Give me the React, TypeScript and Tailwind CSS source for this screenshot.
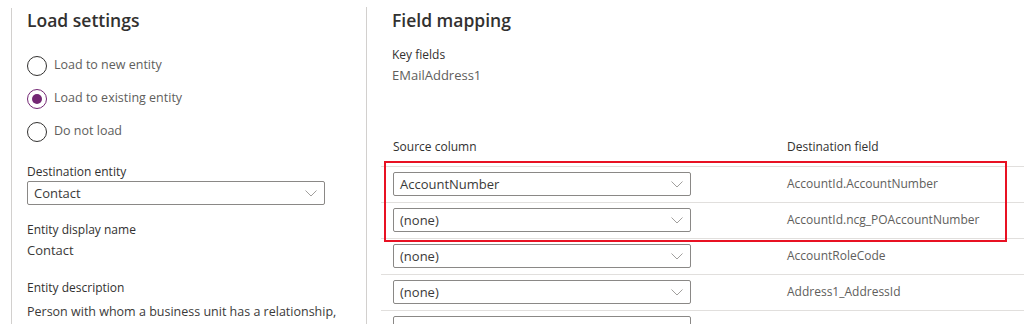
const rows = [
  { source: 'AccountNumber', dest: 'AccountId.AccountNumber' },
  { source: '(none)', dest: 'AccountId.ncg_POAccountNumber' },
  { source: '(none)', dest: 'AccountRoleCode' },
  { source: '(none)', dest: 'Address1_AddressId' },
  { source: '', dest: '' },
];

function Radio({ label, checked }: { label: string; checked?: boolean }) {
  return (
    <div className="h-[33px] flex items-center gap-[7px]">
      <span
        className={`w-[20px] h-[20px] rounded-full border flex items-center justify-center ${checked ? 'border-[#742774]' : 'border-[#323130]'}`}
      >
        {checked && <span className="w-[10px] h-[10px] rounded-full bg-[#742774]" />}
      </span>
      <span className="text-[12.5px] text-[#605e5c]">{label}</span>
    </div>
  );
}

function Dropdown({ value }: { value: string }) {
  return (
    <div className="w-[298px] h-[24px] border border-[#8a8886] rounded-[2px] flex items-center justify-between pl-[6px] pr-[7px] bg-white">
      <span className="text-[13px] text-[#3b3a39] leading-none">{value}</span>
      <svg width="12" height="7" viewBox="0 0 12 7" fill="none" className="text-[#a19f9d]">
        <path d="M0.5 0.5 L6 6 L11.5 0.5" stroke="currentColor" strokeWidth="1" />
      </svg>
    </div>
  );
}

export default function App() {
  return (
    <div className="w-[1024px] h-[324px] overflow-hidden bg-white flex font-['Segoe_UI','Open_Sans',sans-serif]">
      {/* Load settings */}
      <div className="ml-[11px] mt-[8px] w-[355px] border-l border-[#d2d0ce] pl-[15px]">
        <h2 className="text-[17.5px] leading-[24px] font-semibold text-[#323130]">Load settings</h2>
        <div className="mt-[17px] flex flex-col">
          <Radio label="Load to new entity" />
          <Radio label="Load to existing entity" checked />
          <Radio label="Do not load" />
        </div>
        <div className="mt-[16px] text-[12px] leading-[16px] font-medium text-[#323130]">Destination entity</div>
        <div className="mt-[1px]">
          <Dropdown value="Contact" />
        </div>
        <div className="mt-[17px] text-[12px] leading-[16px] font-medium text-[#323130]">Entity display name</div>
        <div className="mt-[2px] text-[13px] leading-[20px] text-[#3b3a39]">Contact</div>
        <div className="mt-[20px] text-[12px] leading-[16px] font-medium text-[#323130]">Entity description</div>
        <div className="mt-[6px] text-[12.5px] leading-[20px] text-[#3b3a39] whitespace-nowrap">
          Person with whom a business unit has a relationship,
        </div>
      </div>

      {/* Field mapping */}
      <div className="mt-[7px] flex-1 border-l border-[#d2d0ce] pl-[14px]">
        <div className="pl-[11px]">
          <h2 className="text-[17.5px] leading-[24px] font-semibold text-[#323130] mt-[1px]">Field mapping</h2>
          <div className="mt-[15px] text-[12px] leading-[16px] font-medium text-[#323130]">Key fields</div>
          <div className="mt-[2px] text-[13px] leading-[20px] text-[#605e5c]">EMailAddress1</div>
        </div>
        <div className="relative mt-[53px]">
          <div className="grid grid-cols-[406px_1fr] border-b border-[#e1dfdd] pb-[10px]">
            <div className="pl-[12px] text-[12px] leading-[18px] font-medium text-[#323130]">Source column</div>
            <div className="text-[12px] leading-[18px] font-medium text-[#323130]">Destination field</div>
          </div>
          {rows.map((r, i) => (
            <div key={i} className="grid grid-cols-[406px_1fr] items-center border-b border-[#e1dfdd] pt-[5px] pb-[6px]">
              <div className="pl-[12px]">
                <Dropdown value={r.source} />
              </div>
              <div className="text-[12px] text-[#605e5c]">{r.dest}</div>
            </div>
          ))}
          {/* annotation box */}
          <div className="absolute left-[3px] top-[23px] w-[623px] h-[81px] border-2 border-[#e81123]" />
        </div>
      </div>
    </div>
  );
}
